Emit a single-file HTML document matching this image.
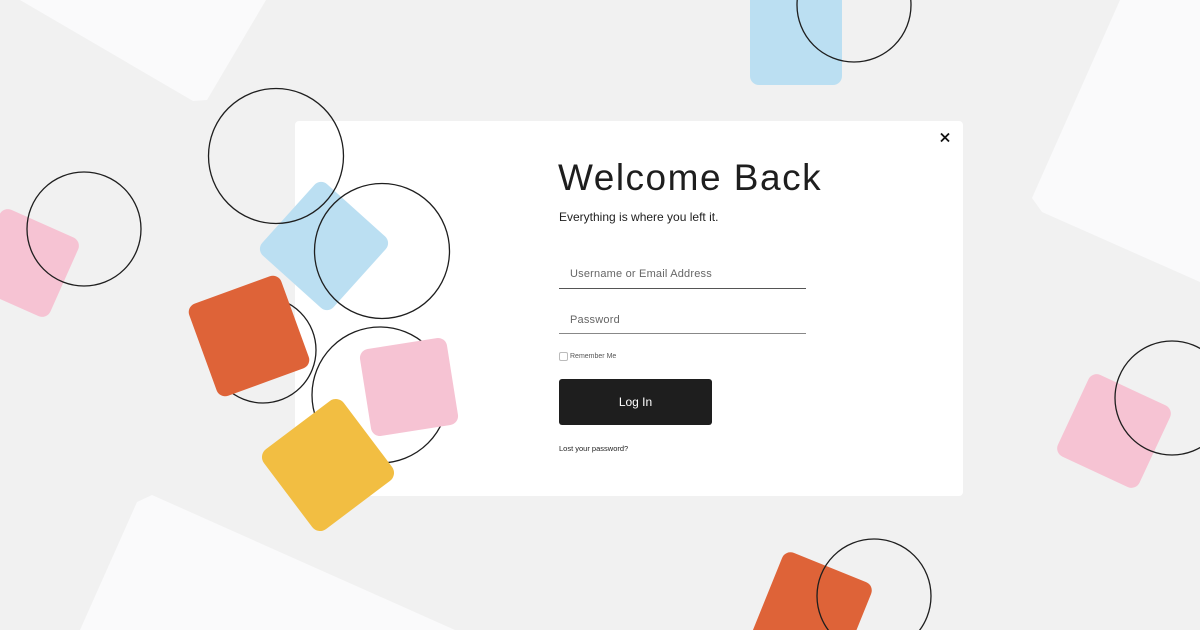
<!DOCTYPE html>
<html><head><meta charset="utf-8"><style>
html,body{margin:0;padding:0;width:1200px;height:630px;overflow:hidden;background:#f1f1f1;font-family:"Liberation Sans",sans-serif;position:relative}
svg{position:absolute;left:0;top:0;overflow:hidden}
.t{position:absolute;color:#1e1e1e;white-space:nowrap}
</style></head><body>
<svg width="1200" height="630" viewBox="0 0 1200 630">
<g fill="#fafafb">
<polygon points="20,0 193,101 207,100 266,0"/>
<polygon points="1120,0 1200,0 1200,282 1042,212 1032,198"/>
<polygon points="80,630 137,502 152,495 455,630"/>
</g>
<rect x="295" y="121" width="668" height="375" rx="4" fill="#fff"/>
<rect x="750" y="-20" width="92" height="105" rx="9" fill="#bbdff2"/>
<circle cx="854" cy="5" r="57" fill="none" stroke="#1e1e1e" stroke-width="1.3"/>
<rect x="-18" y="220" width="86" height="86" rx="9" fill="#f6c3d3" transform="rotate(24 25 263)"/>
<circle cx="84" cy="229" r="57" fill="none" stroke="#1e1e1e" stroke-width="1.3"/>
<rect x="276" y="198" width="96" height="96" rx="9" fill="#bbdff2" transform="rotate(42 324 246)"/>
<circle cx="276" cy="156" r="67.5" fill="none" stroke="#1e1e1e" stroke-width="1.3"/>
<circle cx="382" cy="251" r="67.5" fill="none" stroke="#1e1e1e" stroke-width="1.3"/>
<circle cx="263" cy="350" r="53" fill="none" stroke="#1e1e1e" stroke-width="1.3"/>
<rect x="200" y="287" width="98" height="98" rx="9" fill="#de6338" transform="rotate(-20 249 336)"/>
<circle cx="380" cy="395" r="68" fill="none" stroke="#1e1e1e" stroke-width="1.3"/>
<rect x="365" y="343" width="88" height="88" rx="9" fill="#f6c3d3" transform="rotate(-9 409 387)"/>
<rect x="278" y="415" width="100" height="100" rx="10" fill="#f2be42" transform="rotate(-37 328 465)"/>
<rect x="1069" y="386" width="90" height="90" rx="9" fill="#f6c3d3" transform="rotate(25 1114 431)"/>
<circle cx="1172" cy="398" r="57" fill="none" stroke="#1e1e1e" stroke-width="1.3"/>
<rect x="764" y="564" width="96" height="96" rx="9" fill="#de6338" transform="rotate(22 812 612)"/>
<circle cx="874" cy="596" r="57" fill="none" stroke="#1e1e1e" stroke-width="1.3"/>
<path d="M941 133.5L949 141.5M949 133.5L941 141.5" stroke="#111" stroke-width="1.8"/>
<line x1="559" y1="288.5" x2="806" y2="288.5" stroke="#555" stroke-width="1"/>
<line x1="559" y1="333.5" x2="806" y2="333.5" stroke="#888" stroke-width="1"/>
<rect x="559.5" y="352.5" width="8" height="8" rx="1.5" fill="#fff" stroke="#bbb" stroke-width="1"/>
<rect x="559" y="379" width="153" height="46" rx="3" fill="#1e1e1e"/>
</svg>
<div class="t" style="left:558px;top:157px;font-size:37px;letter-spacing:1.5px">Welcome Back</div>
<div class="t" style="left:559px;top:210px;font-size:12px">Everything is where you left it.</div>
<div class="t" style="left:570px;top:268px;font-size:11px;color:#666;letter-spacing:0.2px">Username or Email Address</div>
<div class="t" style="left:570px;top:314px;font-size:11px;color:#666;letter-spacing:0.2px">Password</div>
<div class="t" style="left:570px;top:353px;font-size:7px;color:#555">Remember Me</div>
<div class="t" style="left:559px;top:395px;width:153px;text-align:center;font-size:12px;color:#fff">Log In</div>
<div class="t" style="left:559px;top:444px;font-size:7.5px">Lost your password?</div>
</body></html>
